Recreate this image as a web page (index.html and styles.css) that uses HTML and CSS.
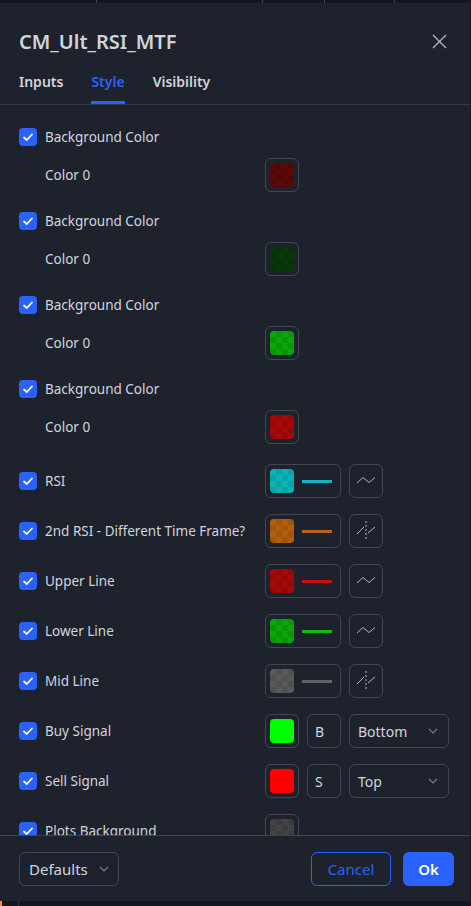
FILE: index.html
```html
<!DOCTYPE html>
<html lang="en">

<head>
    <meta charset="UTF-8">
    <meta name="viewport" content="width=device-width, initial-scale=1.0">
    <title>CM_Ult_RSI_MTF</title>
    <link rel="stylesheet" href="styles.css">
</head>

<body>
    <div class="toolbar">
        <span class="sep s1"></span>
        <span class="sep s2"></span>
        <span class="sep s3"></span>
        <span class="sep s4"></span>
    </div>

    <div class="dialog">
        <header class="dialog-header">
            <h1>CM_Ult_RSI_MTF</h1>
            <svg class="close" width="15" height="15" viewBox="0 0 15 15">
                <path d="M1 1L14 14M14 1L1 14" stroke="#b2b5be" stroke-width="1.4" fill="none" />
            </svg>
        </header>

        <nav class="tabs">
            <span class="tab">Inputs</span>
            <span class="tab active">Style</span>
            <span class="tab">Visibility</span>
        </nav>

        <main class="content">
            <div class="group">
                <div class="row">
                    <span class="check"><svg width="18" height="18" viewBox="0 0 18 18"><path d="M5 9.5L7.8 12L13 6.5" /></svg></span>
                    <span class="label">Background Color</span>
                </div>
                <div class="row">
                    <span></span>
                    <span class="label">Color 0</span>
                    <div class="controls">
                        <span class="box swatch"><span class="fill checker c-maroon"></span></span>
                    </div>
                </div>
            </div>

            <div class="group">
                <div class="row">
                    <span class="check"><svg width="18" height="18" viewBox="0 0 18 18"><path d="M5 9.5L7.8 12L13 6.5" /></svg></span>
                    <span class="label">Background Color</span>
                </div>
                <div class="row">
                    <span></span>
                    <span class="label">Color 0</span>
                    <div class="controls">
                        <span class="box swatch"><span class="fill checker c-darkgreen"></span></span>
                    </div>
                </div>
            </div>

            <div class="group">
                <div class="row">
                    <span class="check"><svg width="18" height="18" viewBox="0 0 18 18"><path d="M5 9.5L7.8 12L13 6.5" /></svg></span>
                    <span class="label">Background Color</span>
                </div>
                <div class="row">
                    <span></span>
                    <span class="label">Color 0</span>
                    <div class="controls">
                        <span class="box swatch"><span class="fill checker c-green"></span></span>
                    </div>
                </div>
            </div>

            <div class="group">
                <div class="row">
                    <span class="check"><svg width="18" height="18" viewBox="0 0 18 18"><path d="M5 9.5L7.8 12L13 6.5" /></svg></span>
                    <span class="label">Background Color</span>
                </div>
                <div class="row">
                    <span></span>
                    <span class="label">Color 0</span>
                    <div class="controls">
                        <span class="box swatch"><span class="fill checker c-red"></span></span>
                    </div>
                </div>
            </div>

            <div class="plots">
                <div class="row">
                    <span class="check"><svg width="18" height="18" viewBox="0 0 18 18"><path d="M5 9.5L7.8 12L13 6.5" /></svg></span>
                    <span class="label">RSI</span>
                    <div class="controls">
                        <span class="box line-picker"><span class="fill checker c-teal"></span><span class="line l-teal"></span></span>
                        <span class="box icon-btn">
                            <svg width="34" height="34" viewBox="0 0 34 34"><polyline points="8,19 14,13.5 20,18.5 26,13.5" /></svg>
                        </span>
                    </div>
                </div>

                <div class="row">
                    <span class="check"><svg width="18" height="18" viewBox="0 0 18 18"><path d="M5 9.5L7.8 12L13 6.5" /></svg></span>
                    <span class="label">2nd RSI - Different Time Frame?</span>
                    <div class="controls">
                        <span class="box line-picker"><span class="fill checker c-orange"></span><span class="line l-orange"></span></span>
                        <span class="box icon-btn">
                            <svg width="34" height="34" viewBox="0 0 34 34">
                                <polyline points="8,20 15,13" />
                                <polyline points="19,19 26,13" />
                                <line class="dash" x1="17" y1="7" x2="17" y2="25" />
                            </svg>
                        </span>
                    </div>
                </div>

                <div class="row">
                    <span class="check"><svg width="18" height="18" viewBox="0 0 18 18"><path d="M5 9.5L7.8 12L13 6.5" /></svg></span>
                    <span class="label">Upper Line</span>
                    <div class="controls">
                        <span class="box line-picker"><span class="fill checker c-red"></span><span class="line l-red"></span></span>
                        <span class="box icon-btn">
                            <svg width="34" height="34" viewBox="0 0 34 34"><polyline points="8,19 14,13.5 20,18.5 26,13.5" /></svg>
                        </span>
                    </div>
                </div>

                <div class="row">
                    <span class="check"><svg width="18" height="18" viewBox="0 0 18 18"><path d="M5 9.5L7.8 12L13 6.5" /></svg></span>
                    <span class="label">Lower Line</span>
                    <div class="controls">
                        <span class="box line-picker"><span class="fill checker c-green"></span><span class="line l-green"></span></span>
                        <span class="box icon-btn">
                            <svg width="34" height="34" viewBox="0 0 34 34"><polyline points="8,19 14,13.5 20,18.5 26,13.5" /></svg>
                        </span>
                    </div>
                </div>

                <div class="row">
                    <span class="check"><svg width="18" height="18" viewBox="0 0 18 18"><path d="M5 9.5L7.8 12L13 6.5" /></svg></span>
                    <span class="label">Mid Line</span>
                    <div class="controls">
                        <span class="box line-picker"><span class="fill checker c-grey"></span><span class="line l-grey"></span></span>
                        <span class="box icon-btn">
                            <svg width="34" height="34" viewBox="0 0 34 34">
                                <polyline points="8,20 15,13" />
                                <polyline points="19,19 26,13" />
                                <line class="dash" x1="17" y1="7" x2="17" y2="25" />
                            </svg>
                        </span>
                    </div>
                </div>

                <div class="row">
                    <span class="check"><svg width="18" height="18" viewBox="0 0 18 18"><path d="M5 9.5L7.8 12L13 6.5" /></svg></span>
                    <span class="label">Buy Signal</span>
                    <div class="controls">
                        <span class="box swatch"><span class="fill c-lime"></span></span>
                        <span class="box char">B</span>
                        <span class="box select">Bottom
                            <svg width="10" height="6" viewBox="0 0 10 6"><path d="M1 1L5 5L9 1" /></svg>
                        </span>
                    </div>
                </div>

                <div class="row">
                    <span class="check"><svg width="18" height="18" viewBox="0 0 18 18"><path d="M5 9.5L7.8 12L13 6.5" /></svg></span>
                    <span class="label">Sell Signal</span>
                    <div class="controls">
                        <span class="box swatch"><span class="fill c-scarlet"></span></span>
                        <span class="box char">S</span>
                        <span class="box select">Top
                            <svg width="10" height="6" viewBox="0 0 10 6"><path d="M1 1L5 5L9 1" /></svg>
                        </span>
                    </div>
                </div>

                <div class="row">
                    <span class="check"><svg width="18" height="18" viewBox="0 0 18 18"><path d="M5 9.5L7.8 12L13 6.5" /></svg></span>
                    <span class="label">Plots Background</span>
                    <div class="controls">
                        <span class="box swatch"><span class="fill checker c-charcoal"></span></span>
                    </div>
                </div>
            </div>
        </main>

        <footer class="dialog-footer">
            <button class="btn defaults">Defaults
                <svg width="10" height="6" viewBox="0 0 10 6"><path d="M1 1L5 5L9 1" /></svg>
            </button>
            <div class="actions">
                <button class="btn cancel">Cancel</button>
                <button class="btn ok">Ok</button>
            </div>
        </footer>
    </div>

    <div class="chart-edge"></div>
</body>

</html>
```

FILE: styles.css
```css
/* Reset and Base Styling */
* {
    margin: 0;
    padding: 0;
    box-sizing: border-box;
}

body {
    width: 471px;
    height: 906px;
    overflow: hidden;
    font-family: "Noto Sans", "Open Sans", sans-serif;
    background-color: #131722;
    color: #d1d4dc;
}

/* Toolbar strip above the dialog */
.toolbar {
    height: 3px;
    display: flex;
    padding-left: 96px;
}

.sep {
    width: 1px;
    height: 3px;
    background: #434651;
}

.s2 { margin-left: 165px; }
.s3 { margin-left: 61px; }
.s4 { margin-left: 69px; }

.dialog {
    width: 470px;
    height: 898px;
    background: #1e222d;
    border-radius: 0 0 6px 0;
    display: flex;
    flex-direction: column;
}

/* Header and tabs */
.dialog-header {
    display: flex;
    align-items: center;
    justify-content: space-between;
    padding: 20px 23px 0 19px;
    height: 57px;
}

.dialog-header h1 {
    font-size: 20px;
    font-weight: 600;
    line-height: 28px;
    color: #d1d4dc;
}

.tabs {
    display: flex;
    gap: 28px;
    padding: 0 19px;
    border-bottom: 1px solid #363a45;
}

.tab {
    padding: 12px 0 9px;
    font-size: 14px;
    font-weight: 600;
    line-height: 20px;
    border-bottom: 3px solid transparent;
    color: #d1d4dc;
}

.tab.active {
    color: #2962ff;
    border-bottom-color: #2962ff;
}

/* Scrolling content */
.content {
    flex: 1;
    overflow: hidden;
    display: flex;
    flex-direction: column;
    gap: 12px;
    padding: 15px 19px 0;
}

.group {
    display: flex;
    flex-direction: column;
    gap: 4px;
}

.plots {
    display: flex;
    flex-direction: column;
    gap: 16px;
    margin-top: 8px;
}

.row {
    display: grid;
    grid-template-columns: 26px 220px auto;
    align-items: center;
    height: 34px;
    flex-shrink: 0;
}

.check {
    width: 18px;
    height: 18px;
    border-radius: 4px;
    background: #2962ff;
}

.check svg {
    display: block;
    fill: none;
    stroke: #fff;
    stroke-width: 1.8;
    stroke-linecap: round;
    stroke-linejoin: round;
}

.label {
    font-size: 13.5px;
    line-height: 20px;
    white-space: nowrap;
}

.controls {
    display: flex;
    gap: 8px;
}

.box {
    height: 34px;
    border: 1px solid #434651;
    border-radius: 6px;
    display: flex;
    align-items: center;
}

.swatch {
    width: 34px;
    justify-content: center;
}

.fill {
    width: 24px;
    height: 24px;
    border-radius: 4px;
}

.checker {
    background-image: conic-gradient(rgba(0, 0, 0, 0.09) 25%, transparent 0 50%, rgba(0, 0, 0, 0.09) 0 75%, transparent 0);
    background-size: 12px 12px;
}

.line-picker {
    width: 76px;
    padding-left: 4px;
    gap: 8px;
}

.line {
    width: 30px;
    height: 3px;
}

.icon-btn {
    width: 34px;
}

.icon-btn svg {
    display: block;
    margin: -1px;
    fill: none;
    stroke: #b2b5be;
    stroke-width: 1;
}

.icon-btn .dash {
    stroke-dasharray: 2 2;
}

.char {
    width: 34px;
    padding-left: 7px;
    font-size: 14px;
}

.select {
    width: 100px;
    padding: 0 10px 0 8px;
    justify-content: space-between;
    font-size: 14px;
}

.select svg,
.defaults svg {
    fill: none;
    stroke: #787b86;
    stroke-width: 1.2;
}

/* Colours */
.c-maroon { background-color: #5a0909; }
.c-darkgreen { background-color: #083808; }
.c-green { background-color: #0aa60a; }
.c-red { background-color: #a50909; }
.c-teal { background-color: #0cb3b5; }
.c-orange { background-color: #b35e0b; }
.c-grey { background-color: #595959; }
.c-charcoal { background-color: #434343; }
.c-lime { background-color: #00ff00; }
.c-scarlet { background-color: #ff0000; }

.l-teal { background: #0fb5c0; }
.l-orange { background: #b8651b; }
.l-red { background: #d20d0d; }
.l-green { background: #0dbd0d; }
.l-grey { background: #626262; }

/* Footer */
.dialog-footer {
    display: flex;
    justify-content: space-between;
    align-items: center;
    padding: 16px 16px 15px 19px;
    border-top: 1px solid #434651;
    background: #1e222d;
}

.actions {
    display: flex;
    gap: 12px;
}

.btn {
    height: 34px;
    border-radius: 6px;
    font-family: inherit;
    font-size: 15px;
    background: none;
    display: flex;
    align-items: center;
}

.defaults {
    width: 100px;
    padding: 0 9px;
    justify-content: space-between;
    border: 1px solid #434651;
    color: #d1d4dc;
}

.cancel {
    width: 80px;
    justify-content: center;
    border: 1px solid #2962ff;
    color: #2962ff;
}

.ok {
    width: 51px;
    justify-content: center;
    border: none;
    background: #2962ff;
    color: #fff;
    font-weight: 600;
}

.chart-edge {
    height: 5px;
    border-left: 2px solid #f7931a;
    position: relative;
}

.chart-edge::after {
    content: "";
    position: absolute;
    left: 16px;
    top: 0;
    bottom: 0;
    border-left: 1px solid #2a2e39;
}
```
